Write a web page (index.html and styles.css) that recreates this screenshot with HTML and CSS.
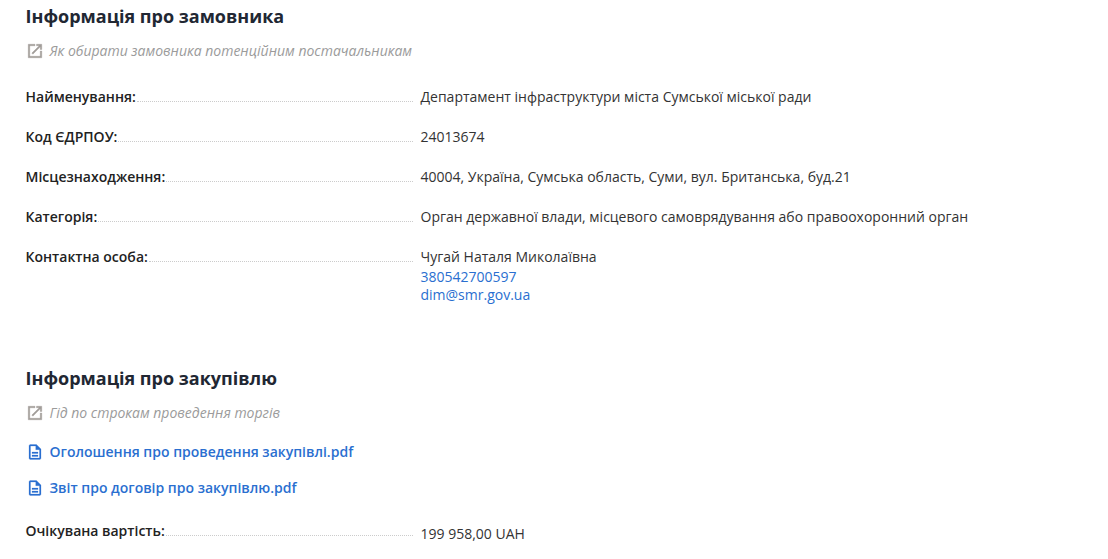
FILE: index.html
```html
<!DOCTYPE html>
<html lang="uk">
<head>
<meta charset="utf-8">
<title>Інформація</title>
<link rel="stylesheet" href="styles.css">
</head>
<body>
<main class="page">
  <section class="section">
    <h2 class="title">Інформація про замовника</h2>
    <a class="hint"><svg class="icon" viewBox="0 0 24 24"><path d="M19 19H5V5h7V3H3v18h18v-9h-2v7zM14 3v2h3.59l-9.83 9.83 1.41 1.41L19 6.41V10h2V3h-7z"/></svg><span>Як обирати замовника потенційним постачальникам</span></a>
    <div class="rows">
      <div class="row"><div class="label"><span>Найменування:</span><i class="dots"></i></div><div class="value">Департамент інфраструктури міста Сумської міської ради</div></div>
      <div class="row"><div class="label"><span>Код ЄДРПОУ:</span><i class="dots"></i></div><div class="value">24013674</div></div>
      <div class="row"><div class="label"><span>Місцезнаходження:</span><i class="dots"></i></div><div class="value">40004, Україна, Сумська область, Суми, вул. Британська, буд.21</div></div>
      <div class="row"><div class="label"><span>Категорія:</span><i class="dots"></i></div><div class="value">Орган державної влади, місцевого самоврядування або правоохоронний орган</div></div>
      <div class="row"><div class="label"><span>Контактна особа:</span><i class="dots"></i></div><div class="value">Чугай Наталя Миколаївна<a class="contact first">380542700597</a><a class="contact">dim@smr.gov.ua</a></div></div>
    </div>
  </section>
  <section class="section second">
    <h2 class="title">Інформація про закупівлю</h2>
    <a class="hint"><svg class="icon" viewBox="0 0 24 24"><path d="M19 19H5V5h7V3H3v18h18v-9h-2v7zM14 3v2h3.59l-9.83 9.83 1.41 1.41L19 6.41V10h2V3h-7z"/></svg><span>Гід по строкам проведення торгів</span></a>
    <div class="files">
      <a class="file"><svg class="icon" viewBox="0 0 24 24"><path d="M8 16h8v2H8zm0-4h8v2H8zm6-10H6c-1.1 0-2 .9-2 2v16c0 1.1.89 2 1.99 2H18c1.1 0 2-.9 2-2V8l-6-6zm4 18H6V4h7v5h5v11z"/></svg><span>Оголошення про проведення закупівлі.pdf</span></a>
      <a class="file"><svg class="icon" viewBox="0 0 24 24"><path d="M8 16h8v2H8zm0-4h8v2H8zm6-10H6c-1.1 0-2 .9-2 2v16c0 1.1.89 2 1.99 2H18c1.1 0 2-.9 2-2V8l-6-6zm4 18H6V4h7v5h5v11z"/></svg><span>Звіт про договір про закупівлю.pdf</span></a>
    </div>
    <div class="row price"><div class="label"><span>Очікувана вартість:</span><i class="dots"></i></div><div class="value">199 958,00 UAH</div></div>
  </section>
</main>
</body>
</html>
```
FILE: styles.css
```css
html, body { margin: 0; padding: 0; background: #fff; overflow: hidden; height: 559px; }
body { font-family: "Open Sans", sans-serif; font-size: 14px; line-height: 18px; color: #333; }
.page { padding: 4px 25.5px 0; }
.title { margin: 0; font-size: 18px; line-height: 24px; font-weight: 700; color: #212733; }
.hint { display: flex; align-items: center; gap: 6px; margin-top: 13px; height: 20px; font-size: 14px; font-style: italic; color: #9b9b9b; }
.hint .icon { fill: #a09c98; stroke: #a09c98; stroke-width: 0.5; }
.icon { width: 18px; height: 18px; flex: none; }
.rows { margin-top: 27px; }
.row { display: flex; margin-bottom: 22px; }
.label { display: flex; align-items: flex-start; width: 387px; margin-right: 8px; flex: none; font-weight: 600; color: #222; }
.dots { flex: 1; height: 13px; margin-left: 1px; border-bottom: 1px dotted #ccc; }
.value { color: #333; }
.contact { display: block; color: #2a6fd0; }
.contact.first { margin-top: 2px; }
.second { margin-top: 62px; }
.files { margin-top: 19px; display: flex; flex-direction: column; gap: 17px; }
.file { display: flex; align-items: center; gap: 6px; height: 19px; font-weight: 600; color: #2a6fd0; }
.file .icon { fill: #2a6fd0; stroke: #2a6fd0; stroke-width: 0.3; }
.price { margin-top: 25px; }
.price .value { margin-top: 3px; }
```
